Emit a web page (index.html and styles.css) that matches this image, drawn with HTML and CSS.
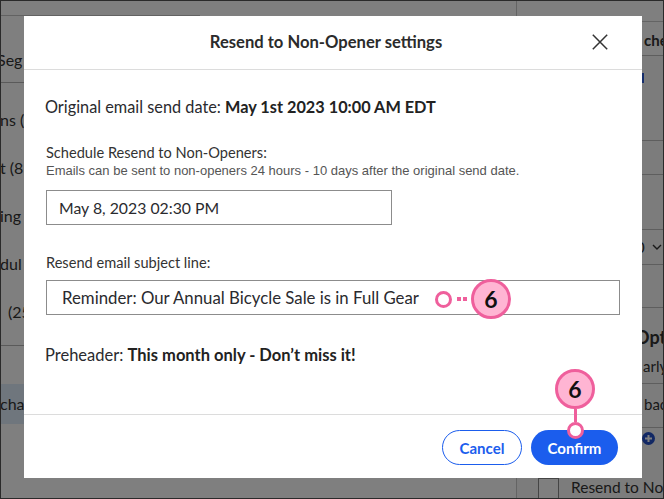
FILE: index.html
```html
<!DOCTYPE html>
<html lang="en">
<head>
<meta charset="utf-8">
<title>Resend to Non-Opener settings</title>
<link rel="stylesheet" href="styles.css">
</head>
<body>
<div class="frame">
  <div class="page">
    <aside class="left">
      <div class="l-top"></div>
      <div class="l-seg"><span class="cut">Seg</span></div>
      <ul class="l-list">
        <li>ns (</li>
        <li>t (8</li>
        <li>ing</li>
        <li>dul</li>
        <li class="indent">(25</li>
      </ul>
      <div class="l-sel">cha</div>
    </aside>
    <main class="center"></main>
    <aside class="right">
      <div class="r-top"></div>
      <div class="r-row r-tab"><span class="r-tabtext">che</span></div>
      <div class="r-row r-a"><span class="r-mark"></span></div>
      <div class="r-row r-b"></div>
      <div class="r-row r-c"></div>
      <div class="r-row r-d"><span class="r-num">0</span><svg class="r-chev" width="10" height="6" viewBox="0 0 10 6"><path d="M1 1l4 4 4-4" fill="none" stroke="#333" stroke-width="1.4"/></svg></div>
      <div class="r-row r-e"></div>
      <div class="r-row r-f"><span class="r-head">Opt</span><span class="r-sub">arly</span></div>
      <div class="r-row r-g"><span class="r-back">bac</span></div>
      <div class="r-h"><svg class="r-plus" width="13" height="13" viewBox="0 0 13 13"><circle cx="6.5" cy="6.5" r="6.5" fill="#2450c8"/><path d="M6.5 3v7M3 6.5h7" stroke="#fff" stroke-width="2"/></svg></div>
      <div class="r-bottom"><span class="r-check"></span><span class="r-label">Resend to Non</span></div>
    </aside>
  </div>

  <div class="overlay"></div>

  <section class="modal">
    <header class="m-head">
      <span></span>
      <h1 class="m-title">Resend to Non-Opener settings</h1>
      <button class="m-close" aria-label="Close"><svg width="16" height="16" viewBox="0 0 16 16"><path d="M0.8 0.8L15.2 15.2M15.2 0.8L0.8 15.2" stroke="#333" stroke-width="1.5" fill="none"/></svg></button>
    </header>
    <div class="m-body">
      <p class="m-orig">Original email send date: <b>May 1st 2023 10:00 AM EDT</b></p>
      <p class="m-label">Schedule Resend to Non-Openers:</p>
      <p class="m-hint">Emails can be sent to non-openers 24 hours - 10 days after the original send date.</p>
      <div class="m-input m-date">May 8, 2023 02:30 PM</div>
      <p class="m-label m-label2">Resend email subject line:</p>
      <div class="m-input m-subject">Reminder: Our Annual Bicycle Sale is in Full Gear</div>
      <p class="m-pre">Preheader: <b>This month only - Don’t miss it!</b></p>
    </div>
    <footer class="m-foot">
      <button class="btn btn-cancel">Cancel</button>
      <button class="btn btn-confirm">Confirm</button>
    </footer>
  </section>

  <div class="callout c1">
    <span class="ring"></span>
    <span class="dots"></span>
    <span class="badge">6</span>
  </div>
  <div class="callout c2">
    <span class="badge">6</span>
    <span class="stem"></span>
    <span class="ring"></span>
  </div>
</div>
</body>
</html>
```

FILE: styles.css
```css
* { box-sizing: border-box; margin: 0; padding: 0; }

html, body { width: 664px; height: 499px; overflow: hidden; }

body {
  font-family: Lato, "Open Sans", Arial, sans-serif;
  color: #2e2e2e;
  background: #fff;
}

.frame {
  position: relative;
  width: 664px;
  height: 499px;
  overflow: hidden;
  background: #fff;
}

.frame::after {
  content: "";
  position: absolute;
  inset: 0;
  border: 1px solid #2a2a2a;
  z-index: 10;
  pointer-events: none;
}

/* ---------- background page ---------- */
.page {
  display: grid;
  grid-template-columns: 200px 1fr 148px;
  height: 499px;
  font-size: 16px;
  color: #333;
}

.left { display: flex; flex-direction: column; }

.l-top { height: 16px; border-bottom: 1px solid #c4c4c4; }

.l-seg {
  height: 67px;
  display: flex;
  align-items: flex-end;
  padding-bottom: 12px;
  line-height: 20px;
  border-bottom: 1px solid #b4b4b4;
  white-space: nowrap;
}

.cut { margin-left: -3px; }

.l-list {
  list-style: none;
  padding: 13px 0 9px;
  border-bottom: 1px solid #b4b4b4;
}

.l-list li {
  height: 48px;
  line-height: 48px;
  white-space: nowrap;
}

.l-list li.indent { padding-left: 8px; }

.l-sel {
  margin-top: 38px;
  height: 40px;
  line-height: 40px;
  background: #dfedfb;
  white-space: nowrap;
}

.right {
  display: flex;
  flex-direction: column;
  border-left: 1px solid #c8c8c8;
  background: #f8f8f8;
  font-size: 15px;
}

.r-top { height: 22px; border-bottom: 1px solid #c8c8c8; background: #fff; }

.r-row {
  border-bottom: 1px solid #bdbdbd;
  display: flex;
  flex-direction: column;
  white-space: nowrap;
}

.r-tab { height: 34px; justify-content: center; background: #fff; padding-top: 2px; }
.r-tabtext { padding-left: 127px; font-weight: 700; font-size: 15px; }

.r-a { height: 85px; }
.r-mark {
  display: block;
  width: 3px;
  height: 10px;
  margin: 17px 0 0 124px;
  background: #2a5ad6;
}

.r-b { height: 34px; }
.r-c { height: 55px; }

.r-d {
  height: 35px;
  flex-direction: row;
  align-items: center;
  padding-left: 119px;
  gap: 7px;
}

.r-e { height: 43px; }

.r-f { height: 76px; padding: 18px 0 0 0; }
.r-head { padding-left: 118px; font-size: 18px; font-weight: 700; line-height: 22px; }
.r-sub { padding-left: 126px; line-height: 20px; margin-top: 8px; }

.r-g { height: 44px; justify-content: center; padding-bottom: 3px; }
.r-back { padding-left: 127px; }

.r-h { height: 50px; padding: 4px 0 0 125px; }
.r-plus { display: block; }

.r-bottom {
  flex: 1;
  display: flex;
  align-items: flex-start;
  padding: 0 0 0 21px;
  gap: 12px;
  white-space: nowrap;
  font-size: 15.5px;
}

.r-check {
  flex: none;
  width: 21px;
  height: 21px;
  border: 1px solid #8a8a8a;
  background: #fff;
}

.r-label { line-height: 20px; margin-top: -1px; }

/* ---------- overlay ---------- */
.overlay {
  position: absolute;
  inset: 0;
  background: rgba(0, 0, 0, 0.5);
}

/* ---------- modal ---------- */
.modal {
  position: absolute;
  left: 24px;
  top: 16px;
  width: 618px;
  height: 462px;
  background: #fff;
  display: flex;
  flex-direction: column;
}

.m-head {
  height: 54px;
  flex: none;
  display: grid;
  grid-template-columns: 1fr auto 1fr;
  align-items: center;
  padding: 0 34px 1px 20px;
  border-bottom: 1px solid #dcdcdc;
}

.m-title {
  font-size: 16.6px;
  font-weight: 700;
  color: #2b2b2b;
  line-height: 20px;
}

.m-close {
  justify-self: end;
  width: 16px;
  height: 16px;
  border: 0;
  background: none;
  display: block;
}
.m-close svg { display: block; }

.m-body {
  flex: 1;
  padding: 27px 22px 0 22px;
  font-size: 16.3px;
  line-height: 20px;
  color: #2a2a2e;
}

.m-orig { margin-left: -1px; }
.m-orig b, .m-pre b { font-weight: 700; color: #222; }

.m-label { margin-top: 26px; font-size: 14.6px; color: #333; }

.m-hint {
  font-family: "Liberation Sans", Arial, sans-serif;
  font-size: 13px;
  line-height: 16px;
  color: #555;
}

.m-input {
  height: 35px;
  border: 1px solid #8c8c8c;
  display: flex;
  align-items: center;
  color: #2a2a2e;
}

.m-date { margin-top: 11px; width: 346px; padding-left: 12px; font-size: 15.8px; }

.m-label2 { margin-top: 28px; }

.m-subject { margin-top: 7px; width: 574px; padding-left: 15px; font-size: 16.8px; }

.m-pre { margin-top: 30px; margin-left: -1px; font-size: 16.5px; }

.m-foot {
  height: 64px;
  flex: none;
  border-top: 1px solid #dcdcdc;
  display: flex;
  justify-content: flex-end;
  align-items: center;
  gap: 9px;
  padding: 2px 24px 0 0;
}

.btn {
  height: 35px;
  border-radius: 18px;
  font-family: Lato, "Open Sans", Arial, sans-serif;
  font-size: 15px;
  font-weight: 700;
  cursor: pointer;
}

.btn-cancel {
  width: 80px;
  border: 1.5px solid #1b5ded;
  background: #fff;
  color: #1b5ded;
}

.btn-confirm {
  width: 87px;
  border: 0;
  background: #1b5ded;
  color: #fff;
}

/* ---------- callouts ---------- */
.callout {
  position: absolute;
  display: flex;
  align-items: center;
}

.badge {
  flex: none;
  width: 40px;
  height: 40px;
  border-radius: 50%;
  border: 3px solid #ef5f9c;
  background: #ffb5d3;
  color: #111;
  font-family: Lato, "Open Sans", Arial, sans-serif;
  font-size: 23px;
  font-weight: 700;
  display: flex;
  align-items: center;
  justify-content: center;
}

.ring {
  flex: none;
  width: 17px;
  height: 17px;
  border-radius: 50%;
  border: 3px solid #ef5f9c;
  background: #fff;
}

.c1 { left: 435px; top: 279px; }

.dots {
  width: 19px;
  height: 4px;
  background: linear-gradient(to right,
    transparent 0 5px, #ef5f9c 5px 9px, transparent 9px 11px, #ef5f9c 11px 15px, transparent 15px);
}

.c2 {
  left: 555px;
  top: 369px;
  flex-direction: column;
}

.stem {
  width: 3px;
  height: 13px;
  background: #ef5f9c;
}
```
